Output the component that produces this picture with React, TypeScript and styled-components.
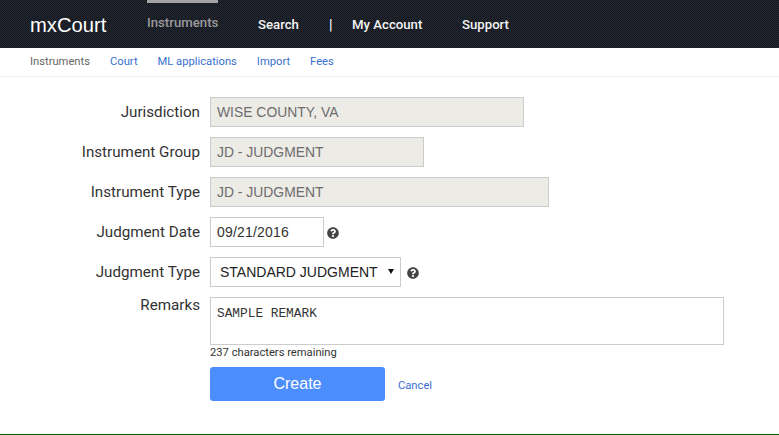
import React from "react"
import styled, { createGlobalStyle } from "styled-components"
import { FaQuestionCircle } from "react-icons/fa"

const GlobalStyle = createGlobalStyle`
  html, body {
    margin: 0;
    padding: 0;
    background: #ffffff;
    font-family: Roboto, "Liberation Sans", sans-serif;
  }
`

const Page = styled.div`
  width: 779px;
  height: 435px;
  display: flex;
  flex-direction: column;
  overflow: hidden;
  box-sizing: border-box;
  border-bottom: 1px solid #006b00;
`

const TopBar = styled.header`
  height: 48px;
  flex: none;
  display: flex;
  align-items: stretch;
  padding-left: 30px;
  background-color: #1b1e27;
  background-image: repeating-conic-gradient(#24272f 0% 25%, #141821 0% 50%);
  background-size: 2px 2px;
`

const Brand = styled.div`
  width: 117px;
  font-family: "Liberation Sans", sans-serif;
  font-size: 20.2px;
  line-height: 50px;
  color: #ffffff;
`

const TopLink = styled.a<{ $active?: boolean; $width: number }>`
  width: ${(p) => p.$width}px;
  flex: none;
  box-sizing: border-box;
  font-size: 13.2px;
  font-weight: 500;
  line-height: ${(p) => (p.$active ? "40px" : "50px")};
  color: ${(p) => (p.$active ? "#9a9a9c" : "#f4f4f4")};
  border-top: ${(p) => (p.$active ? "3px solid #a3a3a5" : "0")};
  height: 48px;
  margin-right: ${(p) => (p.$active ? "40px" : "0")};
  white-space: nowrap;
`

const Pipe = styled.span`
  width: 23px;
  flex: none;
  font-size: 14px;
  font-weight: 500;
  line-height: 50px;
  color: #ffffff;
`

const SubNav = styled.nav`
  height: 29px;
  flex: none;
  box-sizing: border-box;
  display: flex;
  gap: 20px;
  padding-left: 30px;
  border-bottom: 1px solid #eeeeee;
  font-size: 11.2px;
  line-height: 27px;
`

const SubLink = styled.a<{ $current?: boolean }>`
  color: ${(p) => (p.$current ? "#666666" : "#3a6fd0")};
`

const Form = styled.main`
  flex: 1;
  display: flex;
  flex-direction: column;
  gap: 10px;
  padding-top: 20px;
`

const Row = styled.div<{ $top?: boolean }>`
  display: flex;
  align-items: ${(p) => (p.$top ? "flex-start" : "center")};
  gap: 10px;
`

const Label = styled.label`
  width: 200px;
  flex: none;
  text-align: right;
  font-size: 15.2px;
  line-height: 30px;
  color: #333333;
`

const RemarksLabel = styled(Label)`
  line-height: 16px;
`

const TextInput = styled.input<{ $width: number; $spaced?: boolean }>`
  width: ${(p) => p.$width}px;
  height: 30px;
  box-sizing: border-box;
  padding: 0 6px;
  border: 1px solid #cccccc;
  border-radius: 0;
  background: ${(p) => (p.disabled ? "#ecebe6" : "#ffffff")};
  color: ${(p) => (p.disabled ? "#6d6d6d" : "#333333")};
  font-family: "Liberation Sans", sans-serif;
  font-size: ${(p) => (p.disabled ? "13.9px" : "14px")};
  letter-spacing: ${(p) => (p.$spaced ? "0.2px" : "0")};
  opacity: 1;
`

const SelectWrap = styled.div`
  position: relative;
  display: flex;

  &::after {
    content: "";
    position: absolute;
    top: 12px;
    right: 7px;
    border-left: 3.5px solid transparent;
    border-right: 3.5px solid transparent;
    border-top: 5px solid #111111;
    pointer-events: none;
  }
`

const SelectBox = styled.select`
  width: 191px;
  height: 30px;
  box-sizing: border-box;
  padding: 0 0 0 9px;
  border: 1px solid #cccccc;
  border-radius: 0;
  appearance: none;
  background: #ffffff;
  color: #222222;
  font-family: "Liberation Sans", sans-serif;
  font-size: 14px;
`

const Help = styled.span<{ $offset: number }>`
  display: flex;
  margin-left: ${(p) => p.$offset}px;
  margin-top: 2px;
  color: #444444;
  font-size: 12px;
`

const RemarksBlock = styled.div`
  display: flex;
  flex-direction: column;
`

const Remarks = styled.textarea`
  width: 514px;
  height: 48px;
  box-sizing: border-box;
  padding: 9px 6px;
  border: 1px solid #cccccc;
  border-radius: 0;
  resize: none;
  color: #333333;
  font-family: "Liberation Mono", monospace;
  font-size: 12.8px;
  line-height: 14px;
`

const Remaining = styled.div`
  font-size: 11.2px;
  line-height: 14px;
  margin-top: 1px;
  color: #333333;
`

const Actions = styled.div`
  display: flex;
  align-items: center;
  gap: 13px;
  margin-left: 210px;
  margin-top: -3px;
`

const CreateButton = styled.button`
  width: 175px;
  height: 34px;
  border: 0;
  border-radius: 3px;
  background: #4d8eff;
  color: #ffffff;
  font-family: "Liberation Sans", sans-serif;
  font-size: 16px;
`

const CancelLink = styled.a`
  margin-top: 2px;
  font-size: 11.2px;
  color: #3a6fd0;
`

const App: React.FC = () => {
  return (
    <Page>
      <GlobalStyle />
      <TopBar>
        <Brand>mxCourt</Brand>
        <TopLink $active $width={71}>Instruments</TopLink>
        <TopLink $width={71}>Search</TopLink>
        <Pipe>|</Pipe>
        <TopLink $width={110}>My Account</TopLink>
        <TopLink $width={60}>Support</TopLink>
      </TopBar>
      <SubNav>
        <SubLink $current>Instruments</SubLink>
        <SubLink>Court</SubLink>
        <SubLink>ML applications</SubLink>
        <SubLink>Import</SubLink>
        <SubLink>Fees</SubLink>
      </SubNav>
      <Form>
        <Row>
          <Label>Jurisdiction</Label>
          <TextInput $width={314} disabled value="WISE COUNTY, VA" readOnly />
        </Row>
        <Row>
          <Label>Instrument Group</Label>
          <TextInput $width={214} disabled value="JD - JUDGMENT" readOnly />
        </Row>
        <Row>
          <Label>Instrument Type</Label>
          <TextInput $width={339} disabled value="JD - JUDGMENT" readOnly />
        </Row>
        <Row>
          <Label>Judgment Date</Label>
          <TextInput $width={114} $spaced value="09/21/2016" readOnly />
          <Help $offset={-7}><FaQuestionCircle /></Help>
        </Row>
        <Row>
          <Label>Judgment Type</Label>
          <SelectWrap>
            <SelectBox defaultValue="STANDARD JUDGMENT">
              <option>STANDARD JUDGMENT</option>
            </SelectBox>
          </SelectWrap>
          <Help $offset={-4}><FaQuestionCircle /></Help>
        </Row>
        <Row $top>
          <RemarksLabel>Remarks</RemarksLabel>
          <RemarksBlock>
            <Remarks defaultValue="SAMPLE REMARK" />
            <Remaining>237 characters remaining</Remaining>
          </RemarksBlock>
        </Row>
        <Actions>
          <CreateButton>Create</CreateButton>
          <CancelLink>Cancel</CancelLink>
        </Actions>
      </Form>
    </Page>
  )
}

export default App
